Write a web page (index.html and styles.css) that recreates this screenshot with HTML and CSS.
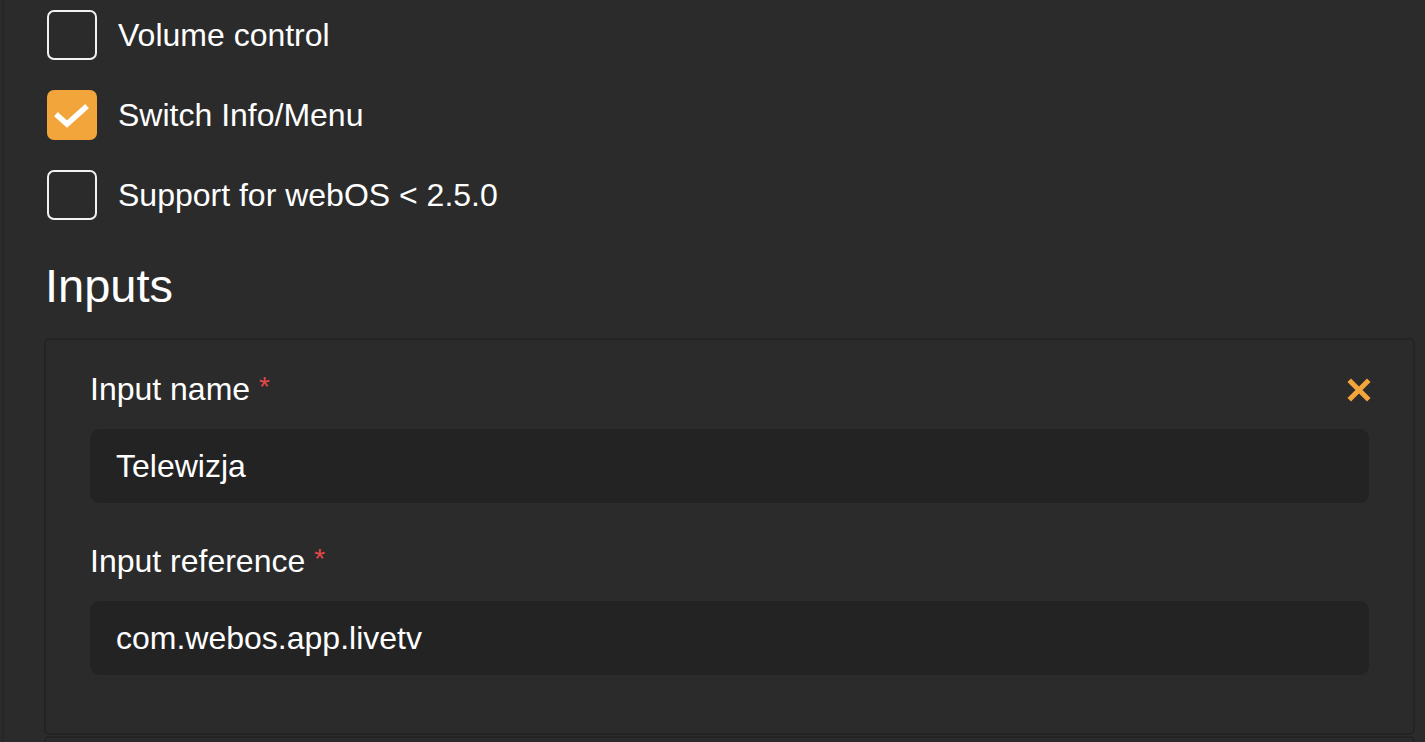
FILE: index.html
```html
<!DOCTYPE html>
<html>
<head>
<meta charset="utf-8">
<link rel="stylesheet" href="styles.css">
</head>
<body>
<div class="panel">
  <div class="checks">
    <label class="check">
      <span class="box"></span>
      <span class="check-label">Volume control</span>
    </label>
    <label class="check">
      <span class="box checked">
        <svg width="50" height="50" viewBox="0 0 50 50"><path d="M11 26 L20 34 L38 18" fill="none" stroke="#fff" stroke-width="5.5" stroke-linecap="square" stroke-linejoin="miter"/></svg>
      </span>
      <span class="check-label">Switch Info/Menu</span>
    </label>
    <label class="check">
      <span class="box"></span>
      <span class="check-label">Support for webOS &lt; 2.5.0</span>
    </label>
  </div>
  <h3 class="section-title">Inputs</h3>
  <div class="card">
    <button class="remove" aria-label="Remove">
      <svg width="24" height="24" viewBox="0 0 24 24"><path d="M4 4 L20 20 M20 4 L4 20" stroke="#f2a53b" stroke-width="5" stroke-linecap="square"/></svg>
    </button>
    <div class="field">
      <div class="field-label">Input name <span class="req">*</span></div>
      <div class="input">Telewizja</div>
    </div>
    <div class="field">
      <div class="field-label">Input reference <span class="req">*</span></div>
      <div class="input">com.webos.app.livetv</div>
    </div>
  </div>
  <div class="card next"></div>
</div>
</body>
</html>
```
FILE: styles.css
```css
html, body {
  margin: 0;
  padding: 0;
  background: #2b2b2b;
  height: 100%;
  overflow: hidden;
}
body {
  font-family: "Liberation Sans", Arial, sans-serif;
  color: #ffffff;
}
.panel {
  margin-left: 2px;
  border-left: 2px solid #262626;
  padding: 10px 10px 0 40px;
  min-height: 100%;
  box-sizing: border-box;
}
.checks {
  display: flex;
  flex-direction: column;
  gap: 30px;
}
.check {
  display: flex;
  align-items: center;
  height: 50px;
  gap: 21px;
  font-size: 32px;
}
.box {
  width: 50px;
  height: 50px;
  box-sizing: border-box;
  border: 2px solid #f2f2f2;
  border-radius: 7px;
  flex: none;
  margin-left: 3px;
  display: flex;
}
.box.checked {
  background: #f2a53b;
  border-color: #f2a53b;
}
.box.checked svg {
  margin: -2px;
}
.section-title {
  margin: 37px 0 24px 1px;
  font-size: 47px;
  font-weight: normal;
  line-height: 57px;
}
.card {
  position: relative;
  border: 2px solid #242424;
  border-radius: 5px;
  padding: 29px 44px 58px 44px;
}
.card.next {
  margin-top: 1px;
  padding: 0;
  height: 40px;
}
.remove {
  position: absolute;
  top: 38px;
  right: 42px;
  background: none;
  border: 0;
  padding: 0;
  width: 24px;
  height: 24px;
  cursor: pointer;
}
.field + .field {
  margin-top: 38px;
}
.field-label {
  font-size: 32px;
  line-height: 40px;
  height: 40px;
  margin-bottom: 20px;
}
.req {
  color: #e3484a;
  font-size: 28px;
  position: relative;
  top: -4px;
  margin-left: 0;
}
.input {
  background: #232323;
  border-radius: 9px;
  height: 74px;
  display: flex;
  align-items: center;
  padding: 0 26px;
  font-size: 32px;
}
```
